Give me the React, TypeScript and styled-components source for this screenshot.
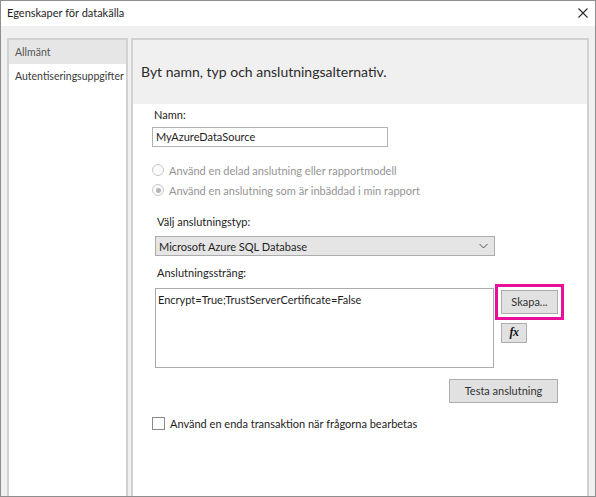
import React from 'react';
import styled, { createGlobalStyle } from 'styled-components';

const GlobalStyle = createGlobalStyle`
  html, body {
    margin: 0;
    padding: 0;
    background: #ffffff;
  }
  body {
    font-family: 'Segoe UI', Lato, 'Liberation Sans', Arial, sans-serif;
    font-size: 11px;
    color: #222;
  }
  * {
    box-sizing: border-box;
  }
`;

const Window = styled.div`
  width: 596px;
  height: 497px;
  border: 1px solid #8e8e8e;
  background: #f0f0f0;
  display: flex;
  flex-direction: column;
  overflow: hidden;
`;

const TitleBar = styled.div`
  height: 25px;
  flex: none;
  background: #ffffff;
  display: flex;
  align-items: center;
  justify-content: space-between;
  padding: 0 7px 2px 6px;
  font-size: 11px;
  color: #1e1e1e;
`;

const CloseIcon = () => (
  <svg width="10" height="10" viewBox="0 0 10 10">
    <path d="M0.5 0.5 L9.5 9.5 M9.5 0.5 L0.5 9.5" stroke="#2b2b2b" strokeWidth="1.1" fill="none" />
  </svg>
);

const Body = styled.div`
  flex: 1;
  display: flex;
  gap: 3px;
  padding: 12px 6px 0 6px;
  min-height: 0;
`;

const Panel = styled.div`
  background: #ffffff;
  border: 2px solid #d2d2d2;
  border-bottom: none;
`;

const Sidebar = styled(Panel)`
  width: 121px;
  flex: none;
  display: flex;
  flex-direction: column;
`;

interface NavItemProps {
  $selected?: boolean;
}

const NavItem = styled.div<NavItemProps>`
  height: 24px;
  line-height: 24px;
  padding-left: 6px;
  font-size: 10.5px;
  color: ${p => (p.$selected ? '#555' : '#3a3a3a')};
  background: ${p => (p.$selected ? '#e6e6e6' : 'transparent')};
  white-space: nowrap;
`;

const Main = styled(Panel)`
  flex: 1;
  display: flex;
  flex-direction: column;
`;

const Header = styled.div`
  height: 64px;
  flex: none;
  background: #f0f0f0;
  display: flex;
  align-items: center;
  padding: 0 0 2px 8px;
  font-size: 14px;
  color: #2b2b2b;
`;

const Content = styled.div`
  padding: 3px 0 0 19px;
  display: flex;
  flex-direction: column;
  align-items: flex-start;
`;

interface LabelProps {
  $gap?: number;
}

const Label = styled.div<LabelProps>`
  height: 16px;
  line-height: 16px;
  margin-top: ${p => p.$gap ?? 0}px;
  padding-left: 2px;
  color: #222;
`;

const TextInput = styled.div`
  margin-top: 4px;
  width: 236px;
  height: 20px;
  border: 1px solid #b3b3b3;
  padding: 0 3px;
  line-height: 18px;
  color: #1e1e1e;
`;

interface RadioRowProps {
  $gap: number;
}

const RadioRow = styled.div<RadioRowProps>`
  margin-top: ${p => p.$gap}px;
  height: 16px;
  display: flex;
  align-items: center;
  gap: 5px;
  color: #949494;
`;

interface RadioProps {
  $checked?: boolean;
}

const Radio = styled.span<RadioProps>`
  width: 12px;
  height: 12px;
  border-radius: 50%;
  border: 1px solid #c9c9c9;
  background: #fbfbfb;
  display: flex;
  align-items: center;
  justify-content: center;
  &::after {
    content: '';
    width: 5px;
    height: 5px;
    border-radius: 50%;
    background: ${p => (p.$checked ? '#b4b4b4' : 'transparent')};
  }
`;

const ConnSection = styled.div`
  margin-left: 3px;
  width: 403px;
  display: flex;
  flex-direction: column;
`;

const Select = styled.div`
  margin-top: 6px;
  width: 340px;
  height: 20px;
  background: #e5e5e5;
  border: 1px solid #acacac;
  display: flex;
  align-items: center;
  justify-content: space-between;
  padding: 0 6px 0 3px;
  color: #1e1e1e;
`;

const Chevron = () => (
  <svg width="9" height="6" viewBox="0 0 9 6">
    <path d="M0.5 1 L4.5 5 L8.5 1" stroke="#555" strokeWidth="1" fill="none" />
  </svg>
);

const StringRow = styled.div`
  margin-top: 7px;
  display: flex;
  gap: 7px;
`;

const TextArea = styled.div`
  width: 339px;
  height: 80px;
  border: 1px solid #ababab;
  padding: 3px 2px;
  line-height: 16px;
  color: #1e1e1e;
`;

const ButtonColumn = styled.div`
  padding-top: 2px;
  display: flex;
  flex-direction: column;
  align-items: flex-start;
  gap: 9px;
`;

interface ButtonProps {
  $width: number;
  $height: number;
  $highlight?: boolean;
}

const Button = styled.div<ButtonProps>`
  width: ${p => p.$width}px;
  height: ${p => p.$height}px;
  background: #e1e1e1;
  border: 1px solid #adadad;
  display: flex;
  align-items: center;
  justify-content: center;
  color: #333;
  padding-bottom: 1px;
  outline: ${p => (p.$highlight ? '3px solid #e8109b' : 'none')};
  outline-offset: 3px;
`;

const FxGlyph = styled.span`
  font-family: 'Liberation Serif', 'Times New Roman', serif;
  font-style: italic;
  font-weight: bold;
  font-size: 12px;
  color: #111;
  letter-spacing: -0.5px;
`;

const TestRow = styled.div`
  margin-top: 11px;
  display: flex;
  justify-content: flex-end;
`;

const CheckRow = styled.div`
  margin-top: 12px;
  height: 16px;
  display: flex;
  align-items: center;
  gap: 5px;
  color: #222;
`;

const CheckBox = styled.span`
  width: 13px;
  height: 13px;
  border: 1px solid #8a8a8a;
  background: #ffffff;
`;

export default function App() {
  return (
    <>
      <GlobalStyle />
      <Window>
        <TitleBar>
          <span>Egenskaper för datakälla</span>
          <CloseIcon />
        </TitleBar>
        <Body>
          <Sidebar>
            <NavItem $selected>Allmänt</NavItem>
            <NavItem>Autentiseringsuppgifter</NavItem>
          </Sidebar>
          <Main>
            <Header>Byt namn, typ och anslutningsalternativ.</Header>
            <Content>
              <Label>Namn:</Label>
              <TextInput>MyAzureDataSource</TextInput>
              <RadioRow $gap={15}>
                <Radio />
                Använd en delad anslutning eller rapportmodell
              </RadioRow>
              <RadioRow $gap={4}>
                <Radio $checked />
                Använd en anslutning som är inbäddad i min rapport
              </RadioRow>
              <ConnSection>
                <Label $gap={16}>Välj anslutningstyp:</Label>
                <Select>
                  <span>Microsoft Azure SQL Database</span>
                  <Chevron />
                </Select>
                <Label $gap={9}>Anslutningssträng:</Label>
                <StringRow>
                  <TextArea>Encrypt=True;TrustServerCertificate=False</TextArea>
                  <ButtonColumn>
                    <Button $width={57} $height={24} $highlight>
                      Skapa...
                    </Button>
                    <Button $width={26} $height={20}>
                      <FxGlyph>fx</FxGlyph>
                    </Button>
                  </ButtonColumn>
                </StringRow>
                <TestRow>
                  <Button $width={109} $height={24}>
                    Testa anslutning
                  </Button>
                </TestRow>
              </ConnSection>
              <CheckRow>
                <CheckBox />
                Använd en enda transaktion när frågorna bearbetas
              </CheckRow>
            </Content>
          </Main>
        </Body>
      </Window>
    </>
  );
}
